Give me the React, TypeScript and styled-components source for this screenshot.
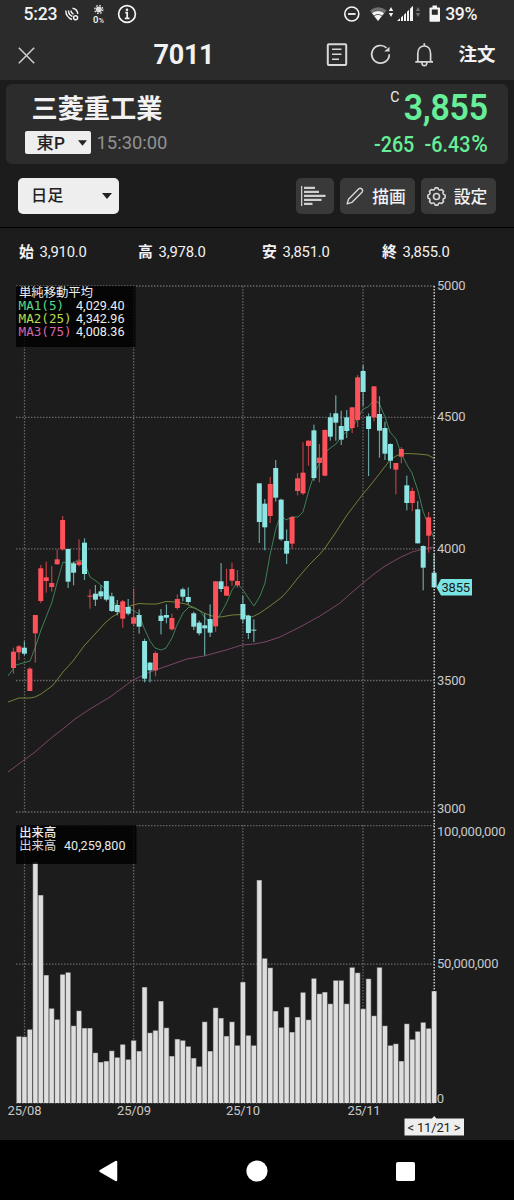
import React from 'react';
import styled, { createGlobalStyle } from 'styled-components';

const GlobalStyle = createGlobalStyle`
  * { box-sizing: border-box; }
  body {
    margin: 0;
    background: #1c1c1c;
    color: #f2f2f2;
    font-family: Roboto, 'Noto Sans CJK JP', sans-serif;
  }
  svg { display: block; flex: none; }
`;

const GREEN = '#66ee99';
const UP = '#ff5159';
const DOWN = '#8ce5e3';

const Screen = styled.div`
  width: 514px;
  height: 1200px;
  display: flex;
  flex-direction: column;
  background: #1c1c1c;
  overflow: hidden;
`;

const StatusBar = styled.div`
  height: 28px;
  flex: none;
  display: flex;
  align-items: center;
  background: #2b2b2b;
  padding: 0 37px 0 23.5px;
  font-size: 17.6px;
  font-weight: 500;
  line-height: 28px;
`;

const Clock = styled.span`
  width: 41px;
  letter-spacing: -0.2px;
`;

const Battery = styled.span`
  margin-left: 4px;
  letter-spacing: -0.4px;
  font-weight: 500;
`;

const Push = styled.div`
  flex: 1;
`;

const Header = styled.header`
  height: 52px;
  flex: none;
  display: grid;
  grid-template-columns: 153.5px 1fr auto;
  align-items: center;
  padding-right: 18.5px;
  background: #2b2b2b;
`;

const CloseButton = styled.button`
  border: 0;
  background: none;
  padding: 2px 0 0 18px;
  justify-self: start;
`;

const Title = styled.h1`
  margin: 0;
  font-size: 27px;
  font-weight: 700;
  line-height: 55px;
  height: 52px;
  letter-spacing: -0.3px;
`;

const HeaderActions = styled.div`
  display: flex;
  align-items: center;
`;

const OrderLink = styled.span`
  margin-left: 25.5px;
  height: 50px;
  font-size: 18.5px;
  font-weight: 700;
  line-height: 52px;
`;

const QuoteCard = styled.section`
  height: 80px;
  flex: none;
  margin: 4px 6px 0;
  padding: 0 20px 0 18.5px;
  display: flex;
  justify-content: space-between;
  background: #2c2c2c;
  border-radius: 6px;
`;

const Company = styled.div`
  padding: 0 0 0 7px;
  font-size: 26.2px;
  font-weight: 700;
  line-height: 50px;
  height: 47px;
`;

const MarketRow = styled.div`
  display: flex;
  align-items: center;
  gap: 6px;
`;

const MarketSelect = styled.div`
  width: 66px;
  height: 23px;
  display: flex;
  align-items: center;
  justify-content: space-between;
  padding: 0 4px 0 12px;
  background: #eee;
  color: #222;
  border-radius: 2px;
  font-size: 17.2px;
  font-weight: 500;
  line-height: 22px;
  letter-spacing: 0.4px;
`;

const Time = styled.span`
  font-size: 18.4px;
  line-height: 23px;
  color: #929292;
`;

const PriceColumn = styled.div`
  display: flex;
  flex-direction: column;
  align-items: flex-end;
  color: ${GREEN};
`;

const Price = styled.div`
  display: flex;
  align-items: flex-start;
  height: 47px;
  font-size: 36px;
  font-weight: 600;
  line-height: 48px;
  transform: scaleX(0.94);
  transform-origin: right;
  letter-spacing: -0.3px;
`;

const CloseMark = styled.span`
  color: #eee;
  font-size: 15px;
  font-weight: 400;
  line-height: 26px;
  margin-right: 5px;
`;

const Change = styled.div`
  display: flex;
  align-items: baseline;
  gap: 11px;
  font-size: 21.5px;
  font-weight: 500;
  line-height: 28px;
  transform: scaleX(0.92);
  transform-origin: right;
`;

const Percent = styled.span`
  margin-left: 1px;
  font-size: 24.5px;
  line-height: 20px;
`;

const Toolbar = styled.div`
  height: 64px;
  flex: none;
  display: flex;
  align-items: center;
  padding: 1px 18.5px 0 18px;
  border-bottom: 1px solid #000;
`;

const PeriodSelect = styled.div`
  width: 101px;
  height: 36px;
  margin-right: auto;
  display: flex;
  align-items: center;
  justify-content: space-between;
  padding: 0 7px 0 13px;
  background: #eee;
  color: #222;
  border-radius: 5px;
  font-size: 16.2px;
  font-weight: 500;
  line-height: 36px;
`;

const ToolButton = styled.button<{ $w: number }>`
  width: ${(p) => p.$w}px;
  height: 36px;
  margin-left: 6px;
  display: flex;
  align-items: center;
  justify-content: center;
  gap: 8px;
  padding: 0 2px 0 0;
  border: 0;
  border-radius: 5px;
  background: #393939;
  color: #f2f2f2;
  font: 500 16.8px/36px 'Noto Sans CJK JP', sans-serif;
`;

const OhlcRow = styled.div`
  height: 50px;
  flex: none;
  display: grid;
  grid-template-columns: 119px 124px 120px 1fr;
  padding-left: 19px;
`;

const OhlcItem = styled.div`
  display: flex;
  gap: 6px;
  font-size: 14.8px;
  line-height: 49px;
  letter-spacing: -0.2px;
  b { font-weight: 700; }
`;

const NavBar = styled.nav`
  height: 60px;
  flex: none;
  display: flex;
  align-items: center;
  justify-content: space-between;
  padding: 2px 99px 0 98px;
  background: #000;
`;

const ChartText = styled.text<{ $size?: number; $fill?: string; $mono?: boolean; $weight?: number }>`
  font-family: ${(p) => (p.$mono ? "'DejaVu Sans Mono', monospace" : "Roboto, 'Noto Sans CJK JP', sans-serif")};
  font-size: ${(p) => p.$size ?? 13}px;
  font-weight: ${(p) => p.$weight ?? 400};
  fill: ${(p) => p.$fill ?? '#c8c8c8'};
`;

const STEP = 5.463;
const xAt = (i: number) => 24.4 + STEP * i;

// [rising, high, body top, body bottom, low] in thirds of a pixel from the group's origin
type Candle = [0 | 1, number, number, number, number];
const groups: { start: number; origin: number; rows: Candle[] }[] = [
  {
    start: -2,
    origin: 500,
    rows: [
      [1, 443, 455, 504, 521], [1, 435, 439, 457, 480], [0, 424, 443, 461, 466], [1, 502, 506, 573, 573],
      [1, 345, 345, 400, 488], [1, 195, 205, 303, 309], [1, 185, 232, 243, 278], [1, 198, 249, 261, 275],
      [1, 148, 178, 193, 193], [1, 48, 60, 148, 152], [0, 147, 147, 245, 264], [0, 185, 190, 218, 256],
      [1, 118, 184, 195, 199], [0, 115, 128, 222, 240], [1, 268, 287, 290, 326], [0, 255, 281, 299, 318],
      [0, 256, 274, 289, 297], [0, 243, 243, 299, 304], [0, 278, 289, 333, 336], [0, 300, 315, 336, 346],
      [1, 300, 304, 356, 383], [0, 297, 321, 341, 346], [1, 266, 352, 371, 378], [0, 328, 345, 380, 401],
    ],
  },
  {
    start: 22,
    origin: 540,
    rows: [
      [0, 296, 303, 416, 427], [0, 366, 368, 391, 427], [1, 334, 339, 391, 409], [0, 207, 227, 243, 283],
      [0, 193, 225, 233, 250], [1, 221, 234, 268, 272], [1, 163, 177, 204, 209], [0, 143, 148, 170, 184],
      [0, 142, 171, 186, 193], [0, 215, 220, 260, 270], [0, 242, 248, 280, 286], [0, 221, 256, 265, 346],
      [0, 193, 237, 278, 291], [1, 124, 124, 259, 275], [0, 69, 124, 147, 156], [1, 86, 139, 167, 168],
      [1, 68, 87, 122, 138], [1, 90, 123, 136, 143], [0, 167, 192, 238, 250], [0, 224, 227, 279, 297],
      [0, 238, 269, 272, 306],
    ],
  },
  {
    start: 43,
    origin: 360,
    rows: [
      [0, 370, 370, 486, 549], [0, 417, 431, 502, 571], [1, 351, 372, 468, 489], [0, 300, 324, 413, 425],
      [0, 416, 419, 538, 542], [0, 508, 543, 581, 612], [1, 468, 471, 551, 566], [1, 339, 355, 393, 406],
      [1, 247, 338, 400, 405], [1, 241, 242, 258, 317], [0, 194, 211, 354, 362], [1, 252, 293, 309, 367],
      [1, 208, 210, 347, 349], [0, 159, 172, 230, 242], [0, 106, 160, 188, 242], [0, 152, 198, 239, 255],
    ],
  },
  {
    start: 59,
    origin: 350,
    rows: [
      [0, 180, 202, 243, 264], [1, 172, 172, 234, 249], [1, 75, 82, 210, 231], [0, 45, 63, 126, 168],
      [0, 190, 199, 237, 378], [1, 109, 109, 202, 214], [0, 139, 192, 242, 323], [0, 215, 234, 311, 330],
      [0, 280, 282, 332, 356], [1, 339, 339, 359, 433], [1, 291, 297, 320, 340], [0, 377, 406, 459, 481],
      [1, 413, 423, 459, 483], [0, 453, 478, 580, 580], [0, 586, 588, 653, 721], [1, 486, 502, 557, 608],
      [0, 610, 668, 712, 712],
    ],
  },
];

const candles = groups.flatMap((g) =>
  g.rows.map(([up, ...ys], k) => ({ up, x: xAt(g.start + k), y: ys.map((v) => g.origin + v / 3) })),
);

// Bar tops in chart pixels, one per session, starting with the last session of July
const volumeTops = [
  ...[709, 710, 688, 187, 285, 525, 625, 658, 523, 517, 677, 632, 684, 684, 758, 786, 783, 752, 772, 733, 778].map(
    (v) => 800 + v / 3,
  ),
  ...[
    541, 573, 381, 518, 511, 423, 503, 588, 537, 541, 559, 594, 619, 485, 573, 443, 474, 528, 485, 556, 366, 526, 556,
    60, 295, 323, 453, 502, 441, 516, 471,
  ].map((v) => 860 + v / 3),
  ...[
    577, 659, 535, 581, 576, 611, 541, 541, 611, 502, 518, 626, 536, 647, 502, 677, 736, 731, 783, 671, 718, 694, 667,
    685, 573,
  ].map((v) => 800 + v / 3),
];

const MA1 =
  '8,676 16,665 23,663 30,661 35,648 41,630 52,602 57,583 63,562 68,563 73,563 78,560 84,561 90,577 96,581 102,586 107,591 112,601 117,605 122,607 128,608 134,611 139,614 144,628 150,641 155,648 161,650 166,648 172,638 177,625 183,613 189,607 194,608 200,611 205,618 211,623 216,621 220,615 226,604 232,590 237,583 243,590 249,599 254,606 260,596 265,583 270,555 276,528 281,515 286,520 292,517 298,517 303,512 309,490 314,475 320,462 325,453 329,449 336,444 341,437 347,431 352,428 358,418 363,409 368,407 374,400 379,403 385,417 390,432 396,439 401,453 407,465 412,473 418,491 423,511 429,527 434,538';
const MA2 =
  '8,702 19,698 30,698 35,697 41,694 52,686 57,680 63,672 73,661 84,646 95,634 106,622 112,617 122,611 130,606 139,603.5 147,604 157,604 166,601.5 176,602 186,604 195,608 204,613 212,616 221,617 232,615 243,614.5 252,617 260,613 270,606 282,597 290,588 297,579 309,565 320,554 325,548 336,532 347,515 363,494 369,487 380,473 390,460 396,456 401,454 407,453.5 418,454 428,455 434,458.5';
const MA3 =
  '8,772 20,763 35,752 50,739 64,728 75,719 90,709 110,697 133,680 150,672 170,665 187,659 204,656 226,650 242,645 254,644 265,642 280,637 300,627 320,616 340,603 350,594 363,583 374,574 385,566 401,557 412,552 423,549 434,547';

const monthLines = [24.5, 133.6, 242.8, 363];
const priceLines = [286, 417.3, 548.9, 680.5, 812];
const volumeLines = [825.6, 964.2, 1103];
const GRID = '#666';

const Chart = () => (
  <svg width="514" height="862" viewBox="0 278 514 862">
    <g stroke={GRID} strokeWidth="1.3" strokeDasharray="1.5 1.5">
      {monthLines.map((x) => (
        <React.Fragment key={x}>
          <line x1={x} x2={x} y1="286" y2="812" />
          <line x1={x} x2={x} y1="825" y2="1103" />
        </React.Fragment>
      ))}
      {[...priceLines, ...volumeLines].map((y) => (
        <line key={y} x1="16" x2="436" y1={y} y2={y} />
      ))}
    </g>

    <g fill="none" strokeWidth="0.9" strokeLinejoin="round">
      <polyline points={MA3} stroke="#874a70" />
      <polyline points={MA2} stroke="#7e8c3e" />
      <polyline points={MA1} stroke="#418a5c" />
    </g>

    {candles.map((c) => (
      <g key={c.x} fill={c.up ? UP : DOWN}>
        <rect x={c.x - 0.6} y={c.y[0]} width="1.2" height={c.y[3] - c.y[0]} opacity="0.68" />
        <rect x={c.x - 2.5} y={c.y[1]} width="5" height={c.y[2] - c.y[1]} />
      </g>
    ))}

    {volumeTops.map((top, k) => {
      const x = xAt(k - 1);
      return (
        <g key={k}>
          <rect x={x - 2.7} y={top} width="5.4" height={1103 - top} fill="#777" />
          <rect x={x - 2.1} y={top + 0.5} width="4.2" height={1102.5 - top} fill="#dedede" />
        </g>
      );
    })}

    <line x1="434.2" x2="434.2" y1="286" y2="1103" stroke="#e8e8e8" strokeWidth="1.3" strokeDasharray="1.5 1.5" />

    <rect x="16" y="286" width="119.5" height="61" fill="#000" opacity="0.8" />
    <ChartText x="19" y="297" $size={12.4} $fill="#eee" textLength="74">単純移動平均</ChartText>
    <ChartText x="18.6" y="310" $size={12.6} $mono $fill="#55d98b">MA1(5)</ChartText>
    <ChartText x="18.6" y="323" $size={12.6} $mono $fill="#b5dd4c">MA2(25)</ChartText>
    <ChartText x="18.6" y="336" $size={12.6} $mono $fill="#d765aa">MA3(75)</ChartText>
    <ChartText x="76" y="310" $size={12.6} $fill="#eee" textLength="48.5">4,029.40</ChartText>
    <ChartText x="76" y="323" $size={12.6} $fill="#eee" textLength="48.5">4,342.96</ChartText>
    <ChartText x="76" y="336" $size={12.6} $fill="#eee" textLength="48.5">4,008.36</ChartText>

    <rect x="16" y="825" width="120.5" height="39" fill="#000" opacity="0.8" />
    <ChartText x="19.3" y="837" $size={12.3} $fill="#eee" $weight={500}>出来高</ChartText>
    <ChartText x="19.3" y="850" $size={12.3} $fill="#d8d8d8">出来高</ChartText>
    <ChartText x="64" y="850" $size={12.6} $fill="#e8e8e8" textLength="61.5">40,259,800</ChartText>

    <ChartText x="437" y="290" textLength="28.5">5000</ChartText>
    <ChartText x="437" y="421" textLength="28.5">4500</ChartText>
    <ChartText x="437" y="553" textLength="28.5">4000</ChartText>
    <ChartText x="437" y="684.5" textLength="28.5">3500</ChartText>
    <ChartText x="437" y="812.5" textLength="28.5">3000</ChartText>
    <ChartText x="437" y="836" textLength="68.5">100,000,000</ChartText>
    <ChartText x="437" y="968.3" textLength="61.5">50,000,000</ChartText>
    <ChartText x="436.7" y="1103">0</ChartText>

    <ChartText x="7.5" y="1114.5" textLength="34">25/08</ChartText>
    <ChartText x="117" y="1114.5" textLength="34">25/09</ChartText>
    <ChartText x="226" y="1114.5" textLength="34">25/10</ChartText>
    <ChartText x="347.5" y="1114.5" textLength="33">25/11</ChartText>

    <path d="M436.5 587.5 441 579H472V595.500H441Z" fill="#7ae3e4" />
    <ChartText x="441.5" y="592.3" $fill="#1c1c1c" textLength="28.5">3855</ChartText>

    <path d="M404.500 1118.500H432l2.200-2.500 2.200 2.500H464V1135.500H404.500Z" fill="#eee" />
    <ChartText x="407.5" y="1132" $fill="#222" textLength="53">&lt; 11/21 &gt;</ChartText>
  </svg>
);

const Caret = ({ w = 9 }: { w?: number }) => (
  <svg width={w} height="6" viewBox="0 0 10 6">
    <path d="M0 0h10L5 6z" fill="#222" />
  </svg>
);

const SatelliteIcon = () => (
  <svg width="14" height="14" viewBox="0 0 14 14" fill="none" stroke="#f2f2f2" strokeWidth="1.4">
    <path d="M.8 3.500Q.8 10 7 12.500M3.500 3.500Q3.500 8 7.500 9.500M6 3.500Q6 6 8.500 7" />
    <path d="M7.500 1.200Q12.500 2 12.800 7" />
    <circle cx="10.600" cy="10.800" r="2" />
  </svg>
);

const BrightnessIcon = () => (
  <svg width="14" height="20" viewBox="0 0 14 20">
    <circle cx="7.800" cy="5.500" r="3" fill="#ddd" />
    <circle cx="7.800" cy="5.500" r="4" fill="none" stroke="#ddd" strokeWidth="1.400" strokeDasharray="1.600 1.540" />
    <ChartText x="2" y="19" $size={9.5} $fill="#f2f2f2" $weight={600}>0</ChartText>
    <ChartText x="7.700" y="19" $size={7} $fill="#f2f2f2" $weight={500}>%</ChartText>
  </svg>
);

const InfoIcon = () => (
  <svg width="20" height="20" viewBox="0 0 20 20">
    <circle cx="10" cy="10" r="8.400" fill="none" stroke="#f5f5f5" strokeWidth="1.700" />
    <circle cx="10" cy="5.800" r="1.300" fill="#f5f5f5" />
    <path d="M8.300 8.700h1.900v5.500M7.800 14.300h4.700" fill="none" stroke="#f5f5f5" strokeWidth="1.700" />
  </svg>
);

const StatusIcons = () => (
  <svg width="98" height="20" viewBox="343 4 98 20" fill="#f5f5f5">
    <circle cx="351.800" cy="14" r="7" fill="none" stroke="#f5f5f5" strokeWidth="1.600" />
    <path d="M348 13.100h7.600v1.800H348z" />
    <path d="M378 21 370 10.500Q378 4 386.500 10.500Z" fill="#707070" />
    <path d="M378 21 371.500 12.500Q378 8.500 384.500 12.500Z" />
    <path d="M371.500 13Q378 8.200 384.500 13M373.800 16Q378 12.800 382.200 16" fill="none" stroke="#2b2b2b" strokeWidth=".7" />
    <path d="m391 7 2.200 4h-4.400zM391 17l2.200-4h-4.400z" />
    <path d="M397 21l3-2.700V21zM401 17.500l2-1.900V21h-2zM404 14.700l2-2V21h-2zM407 11.700l2-2V21h-2zM410 8.700l3-3V21h-3z" />
    <path d="m418 7 2.200 4h-4.400zM418 17l2.200-4h-4.400z" fill="#707070" />
    <path d="M432.500 5.500h4.500v2h2.500q.5 0 .5.800V21q0 .8-.8.800h-8.900q-.8 0-.8-.8V8.300q0-.8.800-.8h2.200z" />
    <path d="M431.800 9.500h6v5.300h-6z" fill="#2b2b2b" />
  </svg>
);

const CloseIcon = () => (
  <svg width="17" height="17" viewBox="0 0 17 17" stroke="#d0d0d0" strokeWidth="1.500">
    <path d="m.8.8 15.400 15.400M16.200.8.8 16.200" />
  </svg>
);

const HeaderIcons = () => (
  <svg width="107" height="26" viewBox="326 41.500 107 26" fill="none" stroke="#d8d8d8" strokeWidth="1.700">
    <rect x="327.800" y="44.800" width="18.400" height="20.600" rx="1" strokeWidth="2" />
    <path d="M332 49.800h9.500M332 54.800h9.500M332 59.800h7" strokeWidth="1.600" />
    <path d="M389.300 54.700a8.800 8.800 0 1 1-2.800-6.300" />
    <path d="M389.500 47.200V52h-5.300z" fill="#d8d8d8" stroke="none" />
    <path d="M415.300 62.300h18M417.800 62V54.500c0-5 2.700-8 6.400-8s6.400 3 6.400 8V62M424.300 46.500v-2.700" />
    <path d="M422 62.500v1.800a2.400 2.400 0 0 0 4.700 0v-1.800" />
  </svg>
);

const ProfileIcon = () => (
  <svg width="25" height="20" viewBox="0 0 25 20" fill="#d0d0d0">
    <path d="M0 0h1.300v20H0zM3 .8h11v2.200H3zM3 4.800h15v2.200H3zM3 8.800h21.500v2.200H3zM3 12.800h17.500v2.200H3zM3 16.800h8.500v2.200H3z" />
  </svg>
);

const PencilIcon = () => (
  <svg width="18" height="18" viewBox="0 0 18 18" fill="none" stroke="#d8d8d8" strokeWidth="1.400" strokeLinejoin="round">
    <path d="M1.200 16.800 2.500 12.200 12.800 1.800Q14.200.6 15.700 1.900T16.200 5L5.800 15.400Z" />
  </svg>
);

const gearPath = Array.from({ length: 8 }, (_, i) => {
  const pt = (r: number, deg: number) => {
    const a = ((i * 45 + deg) * Math.PI) / 180;
    return `${(9.5 + r * Math.cos(a)).toFixed(2)} ${(9.5 + r * Math.sin(a)).toFixed(2)}`;
  };
  return `${i ? 'L' : 'M'}${pt(8.7, -9)}L${pt(8.7, 9)}Q${pt(5.8, 22.5)} ${pt(8.7, 36)}`;
}).join('');

const GearIcon = () => (
  <svg width="19" height="19" viewBox="0 0 19 19" fill="none" stroke="#d8d8d8" strokeWidth="1.600" strokeLinejoin="round">
    <path d={`${gearPath}Z`} />
    <circle cx="9.500" cy="9.500" r="3" />
  </svg>
);

const BackIcon = () => (
  <svg width="20" height="22" viewBox="0 0 20 22">
    <path d="M18 2v18L2.500 11z" fill="#fff" stroke="#fff" strokeWidth="2.500" strokeLinejoin="round" />
  </svg>
);

const HomeIcon = () => (
  <svg width="22" height="22" viewBox="0 0 22 22">
    <circle cx="11" cy="11" r="10.600" fill="#fff" />
  </svg>
);

const RecentIcon = () => (
  <svg width="19" height="19" viewBox="0 0 19 19">
    <rect width="19" height="19" rx="1.800" fill="#fff" />
  </svg>
);

const StatusGroup = styled.div`
  display: flex;
  align-items: center;
  gap: 12px;
`;

export default function App() {
  return (
    <>
      <GlobalStyle />
      <Screen>
        <StatusBar>
          <Clock>5:23</Clock>
          <StatusGroup>
            <SatelliteIcon />
            <BrightnessIcon />
            <InfoIcon />
          </StatusGroup>
          <Push />
          <StatusIcons />
          <Battery>39%</Battery>
        </StatusBar>

        <Header>
          <CloseButton><CloseIcon /></CloseButton>
          <Title>7011</Title>
          <HeaderActions>
            <HeaderIcons />
            <OrderLink>注文</OrderLink>
          </HeaderActions>
        </Header>

        <QuoteCard>
          <div>
            <Company>三菱重工業</Company>
            <MarketRow>
              <MarketSelect>東P<Caret /></MarketSelect>
              <Time>15:30:00</Time>
            </MarketRow>
          </div>
          <PriceColumn>
            <Price><CloseMark>C</CloseMark>3,855</Price>
            <Change><span>-265</span><span>-6.43<Percent>%</Percent></span></Change>
          </PriceColumn>
        </QuoteCard>

        <Toolbar>
          <PeriodSelect>日足<Caret w={10} /></PeriodSelect>
          <ToolButton $w={38}><ProfileIcon /></ToolButton>
          <ToolButton $w={75}><PencilIcon />描画</ToolButton>
          <ToolButton $w={75}><GearIcon />設定</ToolButton>
        </Toolbar>

        <OhlcRow>
          <OhlcItem><b>始</b>3,910.0</OhlcItem>
          <OhlcItem><b>高</b>3,978.0</OhlcItem>
          <OhlcItem><b>安</b>3,851.0</OhlcItem>
          <OhlcItem><b>終</b>3,855.0</OhlcItem>
        </OhlcRow>

        <Chart />

        <NavBar>
          <BackIcon />
          <HomeIcon />
          <RecentIcon />
        </NavBar>
      </Screen>
    </>
  );
}
